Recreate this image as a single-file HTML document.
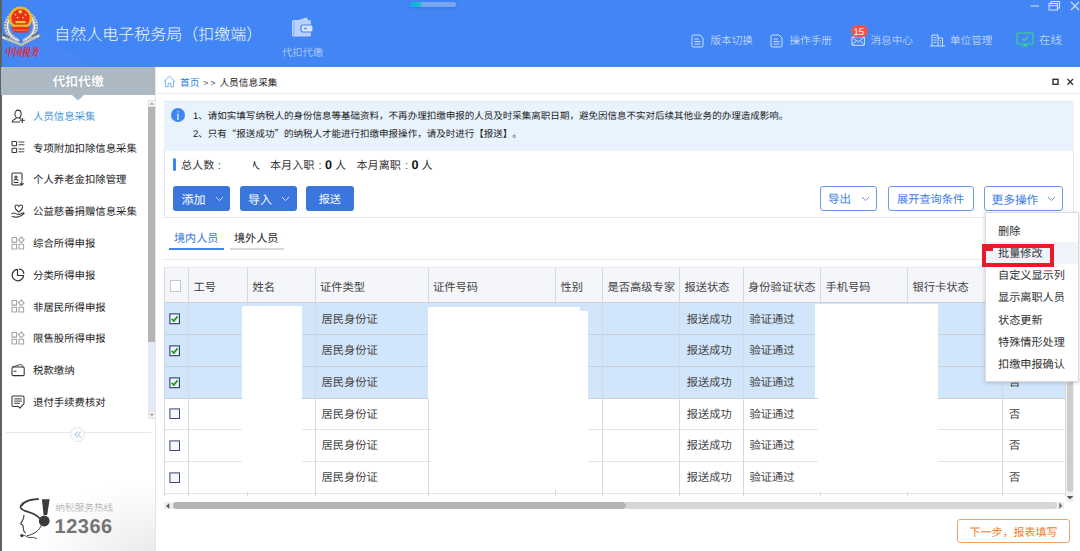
<!DOCTYPE html>
<html lang="zh-CN">
<head>
<meta charset="utf-8">
<title>自然人电子税务局（扣缴端）</title>
<style>
*{box-sizing:border-box;margin:0;padding:0}
html,body{width:1080px;height:551px;overflow:hidden;background:#fff}
body{position:relative;text-rendering:geometricPrecision;text-spacing-trim:space-all;font-family:"Liberation Sans","Noto Sans CJK SC",sans-serif;color:#333;font-size:11px}
.abs{position:absolute}
.t{position:absolute;white-space:nowrap;line-height:1;margin-top:1.6px}
/* header */
#hdr{left:0;top:0;width:1080px;height:67px;background:#4285f4}
#edge{left:0;top:0;width:1.6px;height:551px;background:#5d6065}
.nav{color:rgba(255,255,255,.85);font-weight:300;font-size:10.6px}
/* sidebar */
#sbt{left:1px;top:67px;width:154px;height:27.6px;background:#acb9c3}
.mi{font-size:10.4px;color:#222;left:33px;margin-top:2.3px}
/* buttons */
.bp{position:absolute;background:#3a76dc;border-radius:3px;height:25px;top:186px}
.bo{position:absolute;background:#fff;border:1px solid #6a9af0;border-radius:3px;height:25.7px;top:185.6px}
/* table */
.vl{position:absolute;width:1px;background:#d5d9e2;top:267px;height:229px}
.hl{position:absolute;height:1px;background:#e0e3ea;left:164px;width:902px}
.th{margin-top:1.6px;position:absolute;white-space:nowrap;line-height:1;font-size:11.25px;color:#444;top:281.4px}
.td{margin-top:1.6px;position:absolute;white-space:nowrap;line-height:1;font-size:11.25px;color:#444}
.dd{margin-top:1.6px;position:absolute;white-space:nowrap;line-height:1;font-size:11.15px;color:#333;left:998px}
</style>
</head>
<body>
<!-- HEADER -->
<div id="hdr" class="abs"></div>
<svg class="abs" style="left:0;top:0" width="90" height="67" viewBox="0 0 90 67">
  <polygon points="6,42 40,32 90,67 22,67" fill="#4a8af5" opacity=".5"/>
  <g fill="none" stroke-linecap="round">
    <path d="M10.5 16.5 C4 24 5.5 35 16.5 40.5" stroke="#c9ced5" stroke-width="5.2"/>
    <path d="M31.5 16.5 C38 24 36.5 35 25.5 40.5" stroke="#c9ced5" stroke-width="5.2"/>
    <path d="M10.5 16.5 C4 24 5.5 35 16.5 40.5" stroke="#7f8893" stroke-width="5" stroke-dasharray=".9 1.7" stroke-linecap="butt"/>
    <path d="M31.5 16.5 C38 24 36.5 35 25.5 40.5" stroke="#7f8893" stroke-width="5" stroke-dasharray=".9 1.7" stroke-linecap="butt"/>
    <path d="M10.8 17 C5 24.5 6.5 34.5 16.8 40" stroke="#f1f3f5" stroke-width="1.1"/>
    <path d="M31.2 17 C37 24.5 35.5 34.5 25.2 40" stroke="#f1f3f5" stroke-width="1.1"/>
  </g>
  <path d="M1.8 35.6 L21 43.4 L39.6 33.8 L39.8 36.8 L21.2 46.2 L1.6 38.6 Z" fill="#eef0f3" stroke="#6f7883" stroke-width=".7"/>
  <path d="M5 38.4 L21 44.8 L37 37" fill="none" stroke="#8b939d" stroke-width=".7"/>
  <path d="M3 34.6 L10 37.2 M38.6 32.8 L31.5 36.2" stroke="#59626d" stroke-width="1.2"/>
  <circle cx="20.5" cy="18.2" r="11.7" fill="#e9b92f"/>
  <circle cx="20.5" cy="18.2" r="9.2" fill="#e8301c"/>
  <path d="M11.8 26.6 H29.8 L28 32.4 H13.4 Z" fill="#e8301c"/>
  <rect x="13" y="24.6" width="15.4" height="2.2" fill="#e9b92f"/>
  <rect x="15.6" y="21" width="10" height="2.2" fill="#f2c53c"/>
  <path d="M13.6 30.2 H27.8" stroke="#f2c53c" stroke-width="1" stroke-dasharray="1.2 1"/>
  <g fill="#ffe25c"><circle cx="20.2" cy="11.8" r="1.7"/><circle cx="15.4" cy="14.6" r=".85"/><circle cx="25.4" cy="14.6" r=".85"/><circle cx="17.6" cy="17.6" r=".85"/><circle cx="23" cy="17.6" r=".85"/></g>
  <text transform="translate(4.6 56.2) scale(1 1.32)" font-family="'Liberation Serif','Noto Serif CJK SC',serif" font-size="8.5" font-weight="bold" font-style="italic" fill="#ea1f2b" textLength="34" lengthAdjust="spacingAndGlyphs">中国税务</text>
</svg>
<div class="t" style="left:54.3px;top:26.7px;font-size:16px;font-weight:300;color:#f4f8ff" id="ttl">自然人电子税务局（扣缴端）</div>
<!-- progress pill -->
<div class="abs" style="left:409.5px;top:1.5px;width:46px;height:5.4px;border-radius:3px;background:#79a5ee;overflow:hidden;box-shadow:0 1px 3px rgba(40,90,200,.35)"><div style="width:11.8px;height:6px;background:linear-gradient(90deg,#17a6f2,#10c6b8)"></div></div>
<!-- wallet -->
<svg class="abs" style="left:291px;top:16px" width="24" height="22" viewBox="0 0 24 22">
  <path d="M4 5 L16 1.5 L17 5 Z" fill="#c9dcfb"/>
  <rect x="1" y="4" width="19" height="16.5" rx="1.5" fill="#b9d2fb"/>
  <rect x="2.3" y="5.5" width="1" height="13.5" fill="#4285f4" opacity=".5"/>
  <rect x="10" y="9" width="12" height="7" rx="1.8" fill="#d6e5fd" stroke="#4285f4" stroke-width="1.2"/>
  <rect x="13" y="11.7" width="3" height="1.6" rx=".8" fill="#4285f4"/>
</svg>
<div class="t" style="left:282px;top:47.5px;font-size:10.3px;font-weight:300;color:rgba(255,255,255,.75)">代扣代缴</div>
<!-- nav right -->
<svg class="abs" style="left:691px;top:34px" width="14" height="14" viewBox="0 0 14 14" fill="none" stroke="rgba(255,255,255,.78)" stroke-width=".95"><path d="M2.5 1 H9 L12 4 V11.5 Q12 13 10.5 13 H2.5 Q1 13 1 11.5 V2.5 Q1 1 2.5 1 Z"/><path d="M3.5 5 H8 M3.5 7.5 H9.5 M3.5 10 H9.5"/></svg>
<div class="t nav" style="left:710.5px;top:34.6px">版本切换</div>
<svg class="abs" style="left:770px;top:34px" width="14" height="14" viewBox="0 0 14 14" fill="none" stroke="rgba(255,255,255,.78)" stroke-width=".95"><path d="M2.5 1 H9 L12 4 V11.5 Q12 13 10.5 13 H2.5 Q1 13 1 11.5 V2.5 Q1 1 2.5 1 Z"/><path d="M3.5 5 H8 M3.5 7.5 H9.5 M3.5 10 H9.5"/></svg>
<div class="t nav" style="left:789.5px;top:34.6px">操作手册</div>
<svg class="abs" style="left:850.6px;top:36px" width="14.5" height="10.2" viewBox="0 0 17 12" fill="none" stroke="rgba(255,255,255,.78)" stroke-width="1.15"><rect x="1" y="1" width="15" height="10" rx="1"/><path d="M1.5 1.5 L8.5 7 L15.5 1.5 M1.5 10.5 L6 5.5 M15.5 10.5 L11 5.5"/></svg>
<div class="abs" style="left:850.5px;top:25px;width:17.5px;height:12px;border-radius:6px;background:#f0524f"></div>
<div class="t" style="left:853.5px;top:26.5px;font-size:9.6px;color:#fff">15</div>
<div class="t nav" style="left:870.5px;top:34.6px">消息中心</div>
<svg class="abs" style="left:929.8px;top:34.2px" width="15" height="13" viewBox="0 0 15 13" fill="none" stroke="rgba(255,255,255,.78)" stroke-width=".95"><path d="M2 12 V1 H8 V12 M8 4 H12.5 V12 M0 12 H15"/><path d="M3.5 3.5 H6.5 M3.5 6 H6.5 M3.5 8.5 H6.5 M9.8 6.5 H11 M9.8 9 H11" stroke-width=".9"/></svg>
<div class="t nav" style="left:950px;top:34.6px">单位管理</div>
<svg class="abs" style="left:1016.3px;top:32.2px" width="18" height="15" viewBox="0 0 18 15" fill="none" stroke="#36e07a" stroke-width="1.1"><rect x="1" y="1" width="16" height="11" rx="1.3"/><path d="M6 14 H12 M9 12 V14"/><path d="M6 6.5 L8.2 8.6 L12 4.6"/></svg>
<div class="t" style="left:1039px;top:34.2px;font-weight:300;font-size:11.5px;color:rgba(255,255,255,.85)">在线</div>
<!-- window controls -->
<svg class="abs" style="left:1028px;top:0" width="52" height="12" viewBox="0 0 52 12" fill="none" stroke="rgba(255,255,255,.75)" stroke-width="1.1"><path d="M2.5 6 H11"/><rect x="21" y="3.5" width="8.5" height="6.5"/><path d="M21 5.8 H29.5 M23 3.5 V1.5 H31.5 V8 H29.5"/><path d="M43 2 L51 10 M51 2 L43 10"/></svg>
<div id="edge" class="abs"></div>

<!-- SIDEBAR -->
<div id="sbt" class="abs"></div>
<div class="t" style="left:52.5px;top:74.4px;font-size:12.8px;font-weight:bold;color:#fff;text-shadow:0 0 1px rgba(90,110,130,.6)">代扣代缴</div>
<svg class="abs" style="left:70px;top:94.5px" width="16" height="6" viewBox="0 0 16 6"><path d="M2 0 H14 L8 5.6 Z" fill="#aab9c4"/></svg>
<div class="abs" style="left:147.5px;top:100px;width:7.5px;height:319px;background:#e3e9f6"></div>
<div class="abs" style="left:147.5px;top:107px;width:7.5px;height:234.5px;background:#b4b4b4"></div>
<svg class="abs" style="left:147.5px;top:100px" width="8" height="7" viewBox="0 0 8 7"><rect x=".3" y=".3" width="6.9" height="6.4" fill="#f4f4f4" stroke="#dadada" stroke-width=".6"/><path d="M1.4 4.8 H6.2 L3.8 2 Z" fill="#b5b5b5"/></svg>
<svg class="abs" style="left:147.5px;top:411px" width="8" height="8" viewBox="0 0 8 8"><rect x=".4" y=".4" width="6.8" height="7" fill="#f4f4f4" stroke="#dcdcdc" stroke-width=".6"/><path d="M1.6 2.8 H6 L3.8 5.4 Z" fill="#a8a8a8"/></svg>
<div class="abs" style="left:2px;top:470px;width:153px;height:81px;background:radial-gradient(ellipse 120px 70px at 100% 100%,#ebebeb 0%,#f6f6f6 55%,#fff 100%)"></div>
<div class="abs" style="left:155px;top:67px;width:1px;height:484px;background:#e3e6ea"></div>
<svg class="abs" style="left:10.7px;top:108.6px" width="14" height="14" viewBox="0 0 14 14" fill="none" stroke="#333" stroke-width="1.05" stroke-linejoin="round" stroke-linecap="round"><ellipse cx="7" cy="5" rx="3.1" ry="3.9"/><path d="M5.4 8.4 C5.4 10.4 1.2 10 1.2 13 H8.8 M8.6 8.4 C8.6 9.2 9 9.6 9.6 9.9 M9.2 11.3 H13.4 M11.3 9.2 V13.4"/></svg>
<div class="t mi" style="top:110.6px;color:#4596d8">人员信息采集</div>
<svg class="abs" style="left:10.7px;top:140.4px" width="14" height="14" viewBox="0 0 14 14" fill="none" stroke="#333" stroke-width="1.05" stroke-linejoin="round" stroke-linecap="round"><rect x="1" y="1.5" width="4.6" height="4.2" rx=".8"/><rect x="1" y="8.3" width="4.6" height="4.2" rx=".8"/><path d="M7.8 2 H13 M7.8 4.8 H13 M7.8 9 H13 M7.8 11.8 H13" stroke-width=".9"/></svg>
<div class="t mi" style="top:142.4px;color:#222">专项附加扣除信息采集</div>
<svg class="abs" style="left:10.7px;top:172.2px" width="14" height="14" viewBox="0 0 14 14" fill="none" stroke="#333" stroke-width="1.05" stroke-linejoin="round" stroke-linecap="round"><path d="M9.5 13 H2 Q1 13 1 12 V2 Q1 1 2 1 H10 Q11 1 11 2 V8"/><circle cx="5" cy="5" r="1.1"/><path d="M3 8.3 Q5 6.3 7 8.3 M3 10.5 H7 M10.8 9.5 V13 M9.3 11.6 L10.8 13.2 L12.3 11.6"/></svg>
<div class="t mi" style="top:174.2px;color:#222">个人养老金扣除管理</div>
<svg class="abs" style="left:10.7px;top:203.9px" width="14" height="14" viewBox="0 0 14 14" fill="none" stroke="#333" stroke-width="1.05" stroke-linejoin="round" stroke-linecap="round"><path d="M7.8 8 C2.6 4.6 3.6 0.8 5.8 1 Q7.2 1.1 7.8 2.6 Q8.4 1.1 9.8 1 C12 0.8 13 4.6 7.8 8 Z"/><path d="M0.8 9.6 Q2.6 8.4 4.4 9.4 Q6.6 10.8 8.6 10.2 L12.6 8.8 M1.2 12.6 Q4 13.4 7 13 Q10.4 12.4 13.2 9.4"/></svg>
<div class="t mi" style="top:205.9px;color:#222">公益慈善捐赠信息采集</div>
<svg class="abs" style="left:10.7px;top:235.7px" width="14" height="14" viewBox="0 0 14 14" fill="none" stroke="#9ea2a9" stroke-width="1.05" stroke-linejoin="round" stroke-linecap="round"><rect x="1" y="1.5" width="4.6" height="4.6"/><rect x="1" y="8.3" width="4.6" height="4.6"/><rect x="8" y="8.3" width="4.6" height="4.6"/><path d="M10.3 0.8 L13.2 3.8 L10.3 6.8 L7.4 3.8 Z"/></svg>
<div class="t mi" style="top:237.7px;color:#222">综合所得申报</div>
<svg class="abs" style="left:10.7px;top:267.5px" width="14" height="14" viewBox="0 0 14 14" fill="none" stroke="#333" stroke-width="1.05" stroke-linejoin="round" stroke-linecap="round"><path d="M6.5 1.4 A5.7 5.7 0 1 0 12.6 7.5 H6.5 Z" stroke-width="1.2"/><path d="M8.4 1.2 A4.8 4.8 0 0 1 12.8 5.5" stroke-width="1.2"/></svg>
<div class="t mi" style="top:269.5px;color:#222">分类所得申报</div>
<svg class="abs" style="left:10.7px;top:299.3px" width="14" height="14" viewBox="0 0 14 14" fill="none" stroke="#9ea2a9" stroke-width="1.05" stroke-linejoin="round" stroke-linecap="round"><rect x="1" y="1.5" width="4.6" height="4.6"/><rect x="1" y="8.3" width="4.6" height="4.6"/><rect x="8" y="8.3" width="4.6" height="4.6"/><path d="M10.3 0.8 L13.2 3.8 L10.3 6.8 L7.4 3.8 Z"/></svg>
<div class="t mi" style="top:301.3px;color:#222">非居民所得申报</div>
<svg class="abs" style="left:10.7px;top:331.1px" width="14" height="14" viewBox="0 0 14 14" fill="none" stroke="#9ea2a9" stroke-width="1.05" stroke-linejoin="round" stroke-linecap="round"><rect x="1" y="1.5" width="4.6" height="4.6"/><rect x="1" y="8.3" width="4.6" height="4.6"/><rect x="8" y="8.3" width="4.6" height="4.6"/><path d="M10.3 0.8 L13.2 3.8 L10.3 6.8 L7.4 3.8 Z"/></svg>
<div class="t mi" style="top:333.1px;color:#222">限售股所得申报</div>
<svg class="abs" style="left:10.7px;top:362.8px" width="14" height="14" viewBox="0 0 14 14" fill="none" stroke="#333" stroke-width="1.05" stroke-linejoin="round" stroke-linecap="round"><rect x="1" y="4" width="12.2" height="8.6" rx="1.2"/><path d="M1.6 4 L9.6 1.4 Q10.4 1.2 10.9 2 L12.2 4" stroke-width=".9"/><path d="M3 8.2 H5"/></svg>
<div class="t mi" style="top:364.8px;color:#222">税款缴纳</div>
<svg class="abs" style="left:10.7px;top:394.6px" width="14" height="14" viewBox="0 0 14 14" fill="none" stroke="#333" stroke-width="1.05" stroke-linejoin="round" stroke-linecap="round"><path d="M6.6 11.4 H2.2 Q1 11.4 1 10.2 V2.2 Q1 1 2.2 1 H11.8 Q13 1 13 2.2 V8.6 L8.9 13.2 L6.7 11"/><path d="M3.6 3.9 H10.4 M3.6 6.1 H10.4 M3.6 8.3 H8.6" stroke-width=".95"/></svg>
<div class="t mi" style="top:396.6px;color:#222">退付手续费核对</div>
<div class="abs" style="left:6px;top:431.6px;width:145px;height:1px;background:#e6e8eb"></div>
<div class="abs" style="left:70px;top:426.5px;width:15px;height:15px;border-radius:7.5px;background:#fff;border:1px solid #dfe3ea"></div>
<svg class="abs" style="left:73.5px;top:430.5px" width="8" height="7" viewBox="0 0 8 7" fill="none" stroke="#7f9fd0" stroke-width=".9"><path d="M3.8 .5 L1 3.5 L3.8 6.5 M7 .5 L4.2 3.5 L7 6.5"/></svg>
<svg class="abs" style="left:0;top:480px" width="135" height="71" viewBox="0 480 135 71"><path d="M38.2 499.2 C27 499.6 20.2 503.4 20.6 507.4 C21.2 512.2 33 510.6 39.6 518.2" fill="none" stroke="#3c3c3c" stroke-width="1.7" stroke-linecap="round"/><path d="M38.2 499 C30 499.4 23.2 502.2 22.2 506.2" fill="none" stroke="#3c3c3c" stroke-width="1.1"/><path d="M41.9 499.2 H49.6 L47.2 515 H43.6 Z" fill="#3a3a3a"/><circle cx="44.2" cy="521" r="5.4" fill="#3a3a3a"/><path d="M23.9 515.2 C24.6 518.6 21.6 521.4 20.7 524 C21.6 524.6 22.6 524.6 23 525.4 C22.4 526.6 23.6 527.4 23.4 528.2 C22.8 529 24 529.8 23.8 530.6 C23.6 531.6 25 532 25.2 533" fill="none" stroke="#3c3c3c" stroke-width="1.15" stroke-linecap="round"/><path d="M41.4 525 C39.6 530.6 33.6 534.6 27.4 535.6" fill="none" stroke="#3c3c3c" stroke-width="1" stroke-linecap="round"/><circle cx="21.9" cy="535.6" r="1.7" fill="#3a3a3a"/><path d="M23.5 535.4 C26.6 535.2 27 538.2 30.4 537.6 C33 537.2 34.6 537.4 36.8 538.8" fill="none" stroke="#3c3c3c" stroke-width=".9" stroke-linecap="round"/></svg>
<div class="t" style="left:55.2px;top:502.4px;font-size:9.7px;font-weight:300;color:#9c9c9c">纳税服务热线</div>
<div class="t" style="left:54.6px;top:515.1px;font-size:20px;font-weight:bold;color:#747474;letter-spacing:.5px">12366</div>

<!-- MAIN -->
<svg class="abs" style="left:162.8px;top:75.4px" width="13" height="13" viewBox="0 0 13 13" fill="none" stroke="#79b3e6" stroke-width="1"><path d="M.8 6.6 L6.5 1.2 L12.2 6.6 M2.6 5.6 V11.8 H5.2 V8.2 H7.8 V11.8 H10.4 V5.6"/></svg>
<div class="t" style="left:180px;top:77px;font-size:9.7px;color:#2f7fd6">首页</div>
<div class="t" style="left:202.5px;top:77px;font-size:9.7px;color:#222"><span style="letter-spacing:2.4px;font-size:8.6px;margin-left:.7px;color:#444">&gt;&gt;</span><span style="margin-left:1.4px">人员信息采集</span></div>
<div class="abs" style="left:156px;top:93px;width:924px;height:1px;background:#eceef1"></div>
<svg class="abs" style="left:1051px;top:77px" width="26" height="10" viewBox="0 0 26 10" fill="none" stroke="#333" stroke-width="1.4"><rect x="2" y="2.3" width="5" height="5"/><path d="M16.5 2 L22 7.8 M22 2 L16.5 7.8" stroke-width="1.3"/></svg>
<div class="abs" style="left:164px;top:100.5px;width:910px;height:50px;background:#e8f3fe;border-top:1px solid #dcebfb"></div>
<div class="abs" style="left:170.6px;top:108px;width:14.4px;height:14.4px;border-radius:7.2px;background:#3f86f2"></div>
<div class="t" style="left:176.5px;top:108.4px;font-size:12px;color:#fff">i</div>
<div class="t" style="left:193px;top:110.6px;font-size:9.52px;color:#1c1c1c">1、请如实填写纳税人的身份信息等基础资料，不再办理扣缴申报的人员及时采集离职日期，避免因信息不实对后续其他业务的办理造成影响。</div>
<div class="t" style="left:193px;top:127.3px;font-size:9.52px;color:#1c1c1c">2、只有<span style="font-family:'Noto Sans CJK SC',sans-serif">“</span>报送成功<span style="font-family:'Noto Sans CJK SC',sans-serif">”</span>的纳税人才能进行扣缴申报操作，请及时进行【报送】。</div>
<div class="abs" style="left:164px;top:150px;width:910px;height:68px;border:1px solid #e3e6ec;border-top:none"></div>
<div class="abs" style="left:173px;top:158px;width:3px;height:12.5px;border-radius:1.5px;background:#3f82f0"></div>
<div class="t" style="left:181px;top:159.5px;font-size:11.1px;color:#333">总人数<span style="margin:0 3px 0 3.5px">:</span></div>
<div class="t" style="left:253px;top:159.5px;font-size:11.1px;color:#333;width:20px;overflow:hidden"><span style="margin-left:-3.9px">人</span></div>
<div class="t" style="left:270px;top:159.5px;font-size:11.1px;color:#333">本月入职<span style="margin:0 3.5px 0 4px">:</span><b style="font-size:12.6px;line-height:0;color:#111;position:relative;top:-.6px">0</b> 人</div>
<div class="t" style="left:356.5px;top:159.5px;font-size:11.1px;color:#333">本月离职<span style="margin:0 3.5px 0 4px">:</span><b style="font-size:12.6px;line-height:0;color:#111;position:relative;top:-.6px">0</b> 人</div>
<div class="bp" style="left:173px;width:57px"></div><div class="t" style="left:181.5px;top:192.5px;font-size:12px;color:#fff">添加</div><svg class="abs" style="left:214.5px;top:196px" width="9" height="6" viewBox="0 0 9 6" fill="none" stroke="rgba(255,255,255,.75)" stroke-width="1"><path d="M1 1 L4.5 4.6 L8 1"/></svg>
<div class="bp" style="left:239.5px;width:57.2px"></div><div class="t" style="left:248px;top:192.5px;font-size:12px;color:#fff">导入</div><svg class="abs" style="left:281px;top:196px" width="9" height="6" viewBox="0 0 9 6" fill="none" stroke="rgba(255,255,255,.75)" stroke-width="1"><path d="M1 1 L4.5 4.6 L8 1"/></svg>
<div class="bp" style="left:306.4px;width:47.2px"></div><div class="t" style="left:318.8px;top:193px;font-size:11px;color:#fff">报送</div>
<div class="bo" style="left:819.5px;width:57px"></div><div class="t" style="left:828px;top:193.4px;font-size:11.5px;color:#3d7de4">导出</div><svg class="abs" style="left:860.5px;top:196px" width="9" height="6" viewBox="0 0 9 6" fill="none" stroke="#6a93dc" stroke-width="1"><path d="M1 1 L4.5 4.6 L8 1"/></svg>
<div class="bo" style="left:888px;width:85.5px"></div><div class="t" style="left:897px;top:193.4px;font-size:11.2px;color:#3d7de4">展开查询条件</div>
<div class="bo" style="left:983.7px;width:79.5px"></div><div class="t" style="left:991.5px;top:193.4px;font-size:11.7px;color:#3d7de4">更多操作</div><svg class="abs" style="left:1046.5px;top:196px" width="9" height="6" viewBox="0 0 9 6" fill="none" stroke="#6a93dc" stroke-width="1"><path d="M1 1 L4.5 4.6 L8 1"/></svg>
<div class="t" style="left:174px;top:232px;font-size:11.1px;color:#3a7be0">境内人员</div>
<div class="abs" style="left:169px;top:247.8px;width:54.5px;height:2px;background:#4285f4"></div>
<div class="t" style="left:234px;top:232px;font-size:11.1px;color:#222">境外人员</div>
<div class="abs" style="left:229.5px;top:248.2px;width:54px;height:1.5px;background:#d6d9de"></div>
<div class="abs" style="left:164px;top:259px;width:910px;height:1px;background:#e6e8ec"></div>
<div class="abs" style="left:164px;top:267px;width:902px;height:35px;background:#f5f6fa;border-top:1px solid #e3e6ec"></div>
<div class="abs" style="left:164px;top:302px;width:902px;height:96px;background:#d2e6fb"></div>
<div class="hl" style="top:301.5px;background:#c9d0da"></div>
<div class="hl" style="top:333.5px;background:#c9d0da"></div>
<div class="hl" style="top:365.5px;background:#c9d0da"></div>
<div class="hl" style="top:397.5px;background:#c9d0da"></div>
<div class="hl" style="top:429.0px"></div>
<div class="hl" style="top:460.5px"></div>
<div class="hl" style="top:492.5px"></div>
<div class="vl" style="left:163.5px"></div>
<div class="vl" style="left:188.0px"></div>
<div class="vl" style="left:247.0px"></div>
<div class="vl" style="left:314.5px"></div>
<div class="vl" style="left:427.5px"></div>
<div class="vl" style="left:555.0px"></div>
<div class="vl" style="left:602.0px"></div>
<div class="vl" style="left:678.5px"></div>
<div class="vl" style="left:742.5px"></div>
<div class="vl" style="left:819.5px"></div>
<div class="vl" style="left:906.5px"></div>
<div class="vl" style="left:1002.0px"></div>
<div class="vl" style="left:1065.0px"></div>
<div class="th" style="left:193.5px">工号</div>
<div class="th" style="left:252.5px">姓名</div>
<div class="th" style="left:320px">证件类型</div>
<div class="th" style="left:433px">证件号码</div>
<div class="th" style="left:560.5px">性别</div>
<div class="th" style="left:607.5px">是否高级专家</div>
<div class="th" style="left:684.5px">报送状态</div>
<div class="th" style="left:748px">身份验证状态</div>
<div class="th" style="left:825.5px">手机号码</div>
<div class="th" style="left:912.5px">银行卡状态</div>
<div class="abs" style="left:169.7px;top:280px;width:11.3px;height:11.5px;background:#fff;border:1px solid #c3c6cc"></div>
<div class="td" style="left:321.5px;top:313.4px">居民身份证</div>
<div class="td" style="left:686.7px;top:313.4px">报送成功</div>
<div class="td" style="left:749.5px;top:313.4px">验证通过</div>
<div class="td" style="left:1009px;top:313.4px">否</div>
<svg class="abs" style="left:168.5px;top:313px" width="12" height="12" viewBox="0 0 12 12"><rect x=".9" y=".9" width="9.5" height="9.8" fill="#f4f6fa" stroke="#27306e" stroke-width="1.05"/><path d="M2.8 5.8 L4.8 8 L8.5 3.4" fill="none" stroke="#1f9d1f" stroke-width="1.9"/></svg>
<div class="td" style="left:321.5px;top:344.9px">居民身份证</div>
<div class="td" style="left:686.7px;top:344.9px">报送成功</div>
<div class="td" style="left:749.5px;top:344.9px">验证通过</div>
<div class="td" style="left:1009px;top:344.9px">否</div>
<svg class="abs" style="left:168.5px;top:344.5px" width="12" height="12" viewBox="0 0 12 12"><rect x=".9" y=".9" width="9.5" height="9.8" fill="#f4f6fa" stroke="#27306e" stroke-width="1.05"/><path d="M2.8 5.8 L4.8 8 L8.5 3.4" fill="none" stroke="#1f9d1f" stroke-width="1.9"/></svg>
<div class="td" style="left:321.5px;top:376.9px">居民身份证</div>
<div class="td" style="left:686.7px;top:376.9px">报送成功</div>
<div class="td" style="left:749.5px;top:376.9px">验证通过</div>
<div class="td" style="left:1009px;top:376.9px">否</div>
<svg class="abs" style="left:168.5px;top:376.5px" width="12" height="12" viewBox="0 0 12 12"><rect x=".9" y=".9" width="9.5" height="9.8" fill="#f4f6fa" stroke="#27306e" stroke-width="1.05"/><path d="M2.8 5.8 L4.8 8 L8.5 3.4" fill="none" stroke="#1f9d1f" stroke-width="1.9"/></svg>
<div class="td" style="left:321.5px;top:408.4px">居民身份证</div>
<div class="td" style="left:686.7px;top:408.4px">报送成功</div>
<div class="td" style="left:749.5px;top:408.4px">验证通过</div>
<div class="td" style="left:1009px;top:408.4px">否</div>
<svg class="abs" style="left:168.5px;top:408px" width="12" height="12" viewBox="0 0 12 12"><rect x=".9" y=".9" width="9.6" height="9.6" fill="#f6f7fa" stroke="#2f3a74" stroke-width=".95"/></svg>
<div class="td" style="left:321.5px;top:439.9px">居民身份证</div>
<div class="td" style="left:686.7px;top:439.9px">报送成功</div>
<div class="td" style="left:749.5px;top:439.9px">验证通过</div>
<div class="td" style="left:1009px;top:439.9px">否</div>
<svg class="abs" style="left:168.5px;top:439.5px" width="12" height="12" viewBox="0 0 12 12"><rect x=".9" y=".9" width="9.6" height="9.6" fill="#f6f7fa" stroke="#2f3a74" stroke-width=".95"/></svg>
<div class="td" style="left:321.5px;top:471.9px">居民身份证</div>
<div class="td" style="left:686.7px;top:471.9px">报送成功</div>
<div class="td" style="left:749.5px;top:471.9px">验证通过</div>
<div class="td" style="left:1009px;top:471.9px">否</div>
<svg class="abs" style="left:168.5px;top:471.5px" width="12" height="12" viewBox="0 0 12 12"><rect x=".9" y=".9" width="9.6" height="9.6" fill="#f6f7fa" stroke="#2f3a74" stroke-width=".95"/></svg>
<div class="abs" style="left:242px;top:306px;width:60px;height:186px;background:#fff"></div>
<div class="abs" style="left:427.5px;top:306.7px;width:152px;height:92px;background:#fff"></div>
<div class="abs" style="left:430.7px;top:398px;width:157px;height:92px;background:#fff"></div>
<div class="abs" style="left:579px;top:311px;width:8.5px;height:100px;background:#fff"></div>
<div class="abs" style="left:815px;top:304px;width:122.8px;height:94px;background:#fff"></div><div class="abs" style="left:817.7px;top:398px;width:120.6px;height:93.5px;background:#fff"></div>
<div class="abs" style="left:1065.5px;top:302px;width:8.5px;height:200px;background:#f1f1f1"></div>
<div class="abs" style="left:1067px;top:302px;width:5.6px;height:190px;border-radius:0 0 3px 3px;background:#cdcdcd"></div>
<svg class="abs" style="left:1056px;top:493px;z-index:3" width="20" height="18" viewBox="0 0 20 18"><path d="M10.8 3 H17.2 L14 6.4 Z" fill="#555"/><path d="M3.2 9.6 V16 L6.4 12.8 Z" fill="#777"/></svg>
<div class="abs" style="left:164px;top:502.2px;width:900px;height:7px;background:#eeeeee"></div>
<div class="abs" style="left:172.5px;top:502.4px;width:453.5px;height:6.6px;border-radius:4px;background:#b3b3b3"></div>
<div class="abs" style="left:626px;top:502.4px;width:430.6px;height:6.6px;border-radius:0 4px 4px 0;background:#d6d6d6"></div>
<svg class="abs" style="left:164px;top:501.7px" width="8" height="8" viewBox="0 0 8 8"><path d="M5.3 1.2 V6.8 L2 4 Z" fill="#555"/></svg>
<div class="abs" style="left:984.5px;top:211.7px;width:94px;height:170px;background:#fff;border:1px solid #d9dce2;box-shadow:0 1px 4px rgba(0,0,0,.18)"></div>
<div class="abs" style="left:985.5px;top:241.7px;width:92px;height:22.5px;background:#f0f3fa"></div>
<div class="dd" style="top:225.4px">删除</div>
<div class="dd" style="top:247.4px">批量修改</div>
<div class="dd" style="top:269.9px">自定义显示列</div>
<div class="dd" style="top:291.9px">显示离职人员</div>
<div class="dd" style="top:314.09999999999997px">状态更新</div>
<div class="dd" style="top:336.4px">特殊情形处理</div>
<div class="dd" style="top:358.4px">扣缴申报确认</div>
<div class="abs" style="left:981.6px;top:243.9px;width:72.5px;height:23.4px;border:4px solid #e8192a"></div>
<div class="abs" style="left:985px;top:247.5px;width:7.7px;height:3.8px;background:#e8192a"></div>
<div class="abs" style="left:957px;top:518.6px;width:113px;height:24.4px;border:1px solid #f3a066;border-radius:3px;background:#fff"></div>
<div class="t" style="left:969.5px;top:526px;font-size:11px;color:#f07c2e">下一步，报表填写</div>

</body>
</html>
